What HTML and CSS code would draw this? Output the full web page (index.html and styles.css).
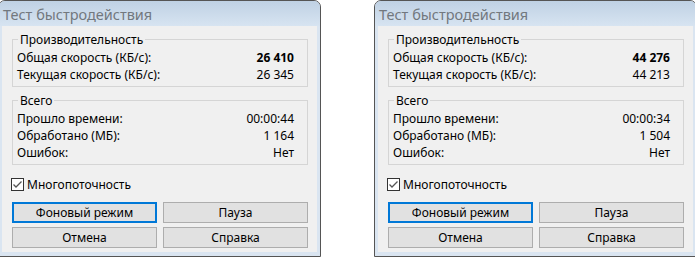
FILE: index.html
```html
<!DOCTYPE html>
<html lang="ru">
<head>
    <meta charset="UTF-8">
    <title>Тест быстродействия</title>
    <link rel="stylesheet" href="styles.css">
</head>
<body>
    <div class="dialog">
        <div class="titlebar">Тест быстродействия</div>
        <div class="client">
            <fieldset class="group">
                <legend>Производительность</legend>
                <div class="row"><span>Общая скорость (КБ/с):</span><b>26 410</b></div>
                <div class="row"><span>Текущая скорость (КБ/с):</span><span>26 345</span></div>
            </fieldset>
            <fieldset class="group second">
                <legend>Всего</legend>
                <div class="row"><span>Прошло времени:</span><span>00:00:44</span></div>
                <div class="row"><span>Обработано (МБ):</span><span>1 164</span></div>
                <div class="row"><span>Ошибок:</span><span>Нет</span></div>
            </fieldset>
            <label class="check">
                <svg width="13" height="13" viewBox="0 0 13 13"><rect x="0.5" y="0.5" width="12" height="12" fill="#fff" stroke="#333"/><path d="M2.5 6.5 L5 9 L10.5 3.5" fill="none" stroke="#555" stroke-width="1.3"/></svg>
                Многопоточность
            </label>
            <div class="buttons">
                <button class="default">Фоновый режим</button>
                <button>Пауза</button>
                <button>Отмена</button>
                <button>Справка</button>
            </div>
        </div>
    </div>
    <div class="dialog">
        <div class="titlebar">Тест быстродействия</div>
        <div class="client">
            <fieldset class="group">
                <legend>Производительность</legend>
                <div class="row"><span>Общая скорость (КБ/с):</span><b>44 276</b></div>
                <div class="row"><span>Текущая скорость (КБ/с):</span><span>44 213</span></div>
            </fieldset>
            <fieldset class="group second">
                <legend>Всего</legend>
                <div class="row"><span>Прошло времени:</span><span>00:00:34</span></div>
                <div class="row"><span>Обработано (МБ):</span><span>1 504</span></div>
                <div class="row"><span>Ошибок:</span><span>Нет</span></div>
            </fieldset>
            <label class="check">
                <svg width="13" height="13" viewBox="0 0 13 13"><rect x="0.5" y="0.5" width="12" height="12" fill="#fff" stroke="#333"/><path d="M2.5 6.5 L5 9 L10.5 3.5" fill="none" stroke="#555" stroke-width="1.3"/></svg>
                Многопоточность
            </label>
            <div class="buttons">
                <button class="default">Фоновый режим</button>
                <button>Пауза</button>
                <button>Отмена</button>
                <button>Справка</button>
            </div>
        </div>
    </div>
</body>
</html>
```

FILE: styles.css
```css
body {
    margin: 0;
    background-color: #fff;
    font-family: 'Noto Sans', sans-serif;
    font-size: 12px;
    color: #000;
    display: flex;
    gap: 53px;
    overflow: hidden;
    height: 257px;
}

.dialog {
    flex: none;
    width: 315px;
    margin-left: -2px;
    border: 1px solid #555;
    border-radius: 7px 7px 0 0;
    background-color: #dae5f1;
    padding: 0 3px 3px;
}

.dialog + .dialog {
    margin-left: 0;
}

.titlebar {
    margin: 0 -3px;
    height: 25px;
    line-height: 27px;
    padding-left: 4px;
    font-size: 14.5px;
    color: #72787e;
    background: linear-gradient(#bfd1e4, #d7e4f1);
    border-radius: 6px 6px 0 0;
}

.client {
    background-color: #f0f0f0;
    height: 226px;
    padding: 7px 9px 4px 10px;
    box-sizing: border-box;
}

.group {
    margin: 0;
    min-width: 0;
    border: 1px solid #d5d5d5;
    padding: 3px 13px 3px 4px;
}

.group legend {
    line-height: 13px;
    padding: 0 2px;
    margin-left: 1px;
}

.group.second {
    margin-top: 7px;
}

.row {
    display: flex;
    justify-content: space-between;
    height: 17px;
    line-height: 17px;
}

.check {
    display: flex;
    align-items: center;
    gap: 3px;
    height: 17px;
    margin: 11px 0 0 -1px;
}

.buttons {
    display: grid;
    grid-template-columns: 1fr 1fr;
    gap: 4px 6px;
    margin-top: 9px;
}

button {
    height: 21px;
    padding: 0;
    font-family: 'Noto Sans', sans-serif;
    font-size: 12px;
    color: #000;
    background-color: #e1e1e1;
    border: 1px solid #adadad;
}

button.default {
    border: 2px solid #0078d7;
}
```
